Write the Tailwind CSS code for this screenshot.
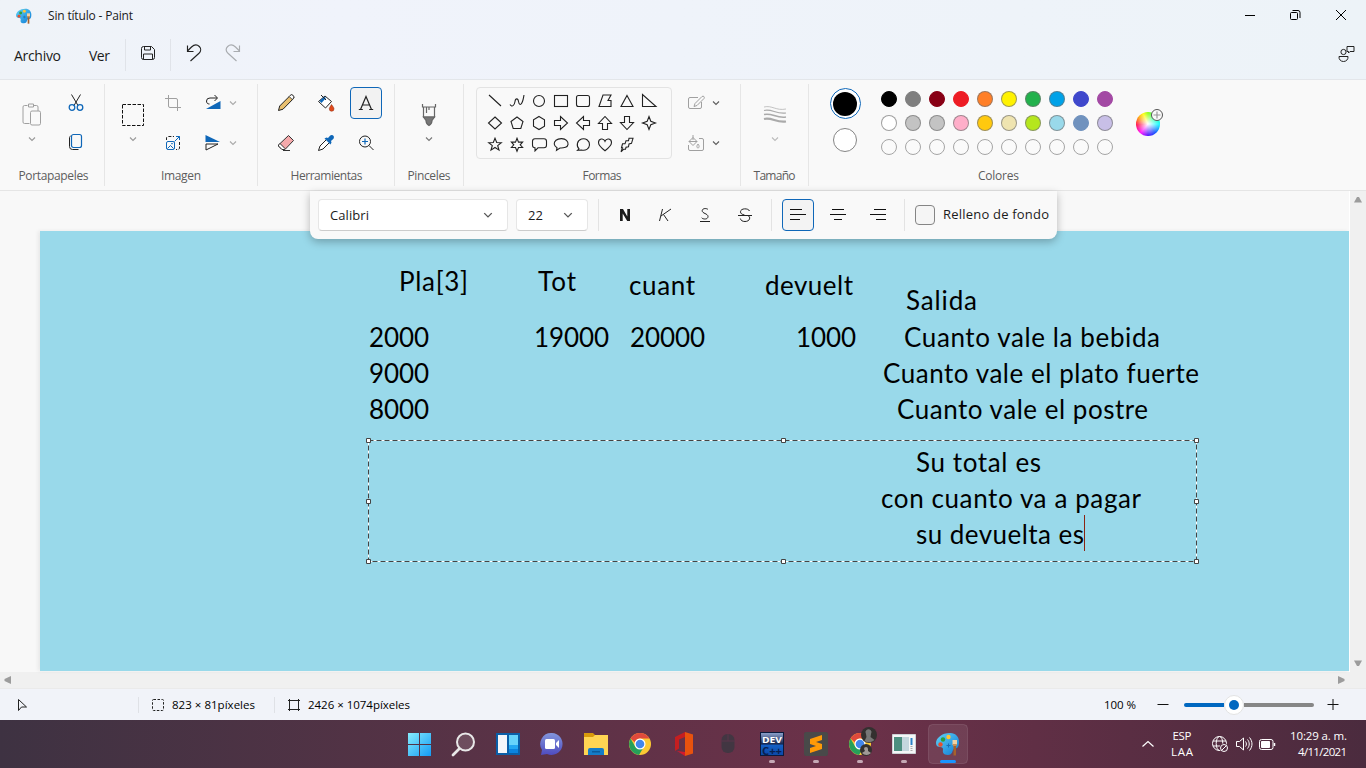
<!DOCTYPE html>
<html lang="es">
<head>
<meta charset="utf-8">
<title>Sin título - Paint</title>
<script src="https://cdn.jsdelivr.net/npm/@tailwindcss/browser@4"></script>
</head>
<body class="w-[1366px] h-[768px] overflow-hidden flex flex-col font-['Open_Sans','Noto_Sans',sans-serif] text-xs text-[#1b1b1b] bg-[#f9f9f9]">
<svg class="absolute w-0 h-0">
  <symbol id="chev" viewBox="0 0 8 8"><path d="M1 2.500 4 5.500 7 2.500" fill="none" stroke="currentColor" stroke-width="1.100"/></symbol>
  <defs><linearGradient id="pg" x1="0" y1="0" x2="1" y2="1"><stop stop-color="#5fd3f7"/><stop offset="1" stop-color="#0f7ad4"/></linearGradient></defs>
  <symbol id="palette" viewBox="0 0 24 24">
    <path d="M14 1c6 0 9 4 9 9 0 3-.5 5-2 6l-3 1c-2 1-1 6-6 6-5 0-5.500-3-5-5s-1-3-3-3-4-1-4-4C0 6 6 1 14 1z" fill="url(#pg)"/>
    <circle cx="7" cy="7.500" r="2.200" fill="#2da03c"/><circle cx="12.500" cy="5" r="2.200" fill="#ffc533"/><circle cx="4.500" cy="12.500" r="2.200" fill="#e8502d"/>
    <path d="M12.500 11.500v4M10.500 13.500h4" stroke="#1a6fb5"/><path d="M16.500 8h4.500v5h-4.500z" fill="#f0d2a4"/><path d="M16.500 12h4.500l-1 3h-2.500z" fill="#c98f55"/><path d="M17.500 14h2.500v9.500h-2.500z" fill="#a5612b"/>
  </symbol>
</svg>

<header class="h-20 shrink-0 flex flex-col border-b border-[#e3e6ea] bg-linear-to-r from-[#eff3f8] via-[#f0f3fb] via-25% to-[#edf3f8]">
  <div class="h-8 flex items-center">
    <svg class="ml-4 w-4 h-4" viewBox="0 0 24 24"><use href="#palette"/></svg>
    <span class="ml-4 leading-4" data-w="85">Sin título - Paint</span>
    <div class="ml-auto flex items-center text-black">
      <svg class="w-[46px] h-7" viewBox="0 0 46 28" fill="none" stroke="currentColor"><path d="M19 13.500h10"/></svg>
      <svg class="w-[46px] h-7" viewBox="0 0 46 28" fill="none" stroke="currentColor"><rect x="18.500" y="10.500" width="7" height="7" rx="1"/><path d="M20.500 8.500h5.500a2 2 0 0 1 2 2v5.500"/></svg>
      <svg class="w-[46px] h-7 mr-0.5" viewBox="0 0 46 28" fill="none" stroke="currentColor"><path d="m18 8 10 10M28 8 18 18"/></svg>
    </div>
  </div>
  <nav class="h-12 flex items-center text-[14px]">
    <span class="ml-3.5 mt-0.5 leading-5" data-w="47">Archivo</span>
    <span class="ml-7 mt-0.5 leading-5" data-w="21">Ver</span>
    <i class="w-px h-8 ml-[15px] bg-[#e0e3e9]"></i>
    <svg class="ml-[14px] w-4 h-4 mb-1" viewBox="0 0 16 16" fill="none" stroke="#222"><path d="M1.500 3.500a2 2 0 0 1 2-2h8l3 3v8a2 2 0 0 1-2 2h-9a2 2 0 0 1-2-2zM4.500 1.500v3.500h6V1.500M3.500 14.500V9h9v5.500"/></svg>
    <i class="w-px h-8 ml-[14px] bg-[#e0e3e9]"></i>
    <svg class="ml-[15px] w-4 h-[18px] mb-1" viewBox="0 0 16 18" fill="none" stroke="#222" stroke-width="1.150"><path d="M1.500 1.500v6h6M1.500 7 5.500 3c3-2.800 6-2.300 7.800-.5s2 4.500-.3 6.800L4.500 17"/></svg>
    <svg class="ml-[23px] w-4 h-[18px] mb-1" viewBox="0 0 16 18" fill="none" stroke="#a9acb0" stroke-width="1.150"><path d="M14.500 1.500v6h-6M14.500 7l-4-4C7.500.2 4.500.7 2.700 2.500s-2 4.500.3 6.800l8.500 7.700"/></svg>
    <svg class="ml-auto mr-[11px] w-[17px] h-[17px] mb-1" viewBox="0 0 17 17" fill="none" stroke="#222"><circle cx="5.500" cy="7" r="2.600"/><path d="M1 11.500h9c.3 3-1.800 5-4.500 5s-4.800-2-4.500-5zM9 1.500h7v5h-4l-1.500 1.500V6.500H9z"/></svg>
  </nav>
</header>

<section class="h-[111px] shrink-0 flex border-b border-[#e5e5e5] text-[#5d5d5d]">
  <div class="w-[105px] flex flex-col items-center border-r border-[#e6e6e6] my-1">
    <div class="h-20 w-full flex">
      <div class="w-16 flex flex-col items-center">
        <svg class="mt-[19px] w-5 h-[23px]" viewBox="0 0 20 23" fill="none" stroke="#a0a0a0"><path d="M7.500 20.500h-5a1.500 1.500 0 0 1-1.500-1.500V4a1.500 1.500 0 0 1 1.500-1.500h3M11.500 2.500h3A1.500 1.500 0 0 1 16 4v4M6.500 1h5v3h-5z"/><rect x="8.500" y="8" width="10" height="14" rx="1.500"/></svg>
        <svg class="mt-[9px] w-2 h-2 text-[#999]"><use href="#chev"/></svg>
      </div>
      <div class="w-6 flex flex-col items-center">
        <svg class="mt-[10px] w-4 h-[18px]" viewBox="0 0 16 18" fill="none"><path d="M3.500.500 10 11.500M12.500.500 6 11.500" stroke="#222"/><g stroke="#0f67b8" stroke-width="1.300"><circle cx="4" cy="13.500" r="2.800"/><circle cx="12" cy="13.500" r="2.800"/></g></svg>
        <svg class="mt-[21px] w-4 h-[18px]" viewBox="0 0 16 18" fill="none"><path d="M2.500 3C1.500 3.500 1.500 4.500 1.500 5v8.500a3 3 0 0 0 3 3h6" stroke="#222"/><rect x="3.500" y="1.500" width="10" height="13" rx="2" stroke="#0f67b8" stroke-width="1.200"/></svg>
      </div>
    </div>
    <span class="mt-1 leading-4 ml-[3px]" data-w="70">Portapapeles</span>
  </div>

  <div class="w-[153px] flex flex-col items-center border-r border-[#e6e6e6] my-1">
    <div class="h-20 w-full flex">
      <div class="w-14 flex flex-col items-center">
        <svg class="mt-[19px] w-6 h-6" viewBox="0 0 24 24" fill="none" stroke="#111"><rect x="1.500" y="1.500" width="21" height="21" stroke-dasharray="3.500 1.500"/></svg>
        <svg class="mt-2 w-2 h-2 text-[#999]"><use href="#chev"/></svg>
      </div>
      <div class="w-6 flex flex-col items-center">
        <svg class="mt-[11px] w-4 h-4" viewBox="0 0 16 16" fill="none" stroke="#a0a0a0"><path d="M0 3.500h11a1.500 1.500 0 0 1 1.500 1.500v11M3.500 0v11A1.500 1.500 0 0 0 5 12.500h11"/></svg>
        <svg class="mt-6 w-4 h-4" viewBox="0 0 16 16" fill="none"><path d="M1.500 5V3a1.500 1.500 0 0 1 1.500-1.500h6M14.500 7v6a1.500 1.500 0 0 1-1.500 1.500h-2" stroke="#222" stroke-dasharray="3 1.500"/><g stroke="#0f67b8"><rect x="1.500" y="6.500" width="8" height="8" rx="1.500"/><path d="m2.500 13.500 3-3 3 3M9.500 6.500l5-5M11 1.500h3.500V5"/><circle cx="7" cy="8.700" r=".4"/></g></svg>
      </div>
      <div class="w-14 flex flex-col pl-5">
        <div class="mt-[10px] flex items-center"><svg class="w-4 h-[18px]" viewBox="0 0 16 18" fill="none"><path d="M12 4H5a3.500 3 0 0 0-3.500 3c0 2 1 3 3 3M9.500 1 12.500 4 9.500 7" stroke="#222"/><path d="M15.500 7v8H1z" fill="#0f67b8"/></svg><svg class="ml-2 w-2 h-2 text-[#aaa]"><use href="#chev"/></svg></div>
        <div class="mt-[22px] flex items-center"><svg class="w-4 h-[18px]" viewBox="0 0 16 18"><path d="M.5 1v7H15z" fill="#0f67b8"/><path d="M1 10v6l12-6z" fill="none" stroke="#222"/></svg><svg class="ml-2 w-2 h-2 text-[#aaa]"><use href="#chev"/></svg></div>
      </div>
    </div>
    <span class="mt-1 leading-4" data-w="40">Imagen</span>
  </div>

  <div class="w-[137px] flex flex-col items-center border-r border-[#e6e6e6] my-1">
    <div class="h-[79px] -mt-px grid grid-cols-[40px_40px_40px] grid-rows-[40px_40px] place-items-center">
      <svg class="w-[18px] h-[18px]" viewBox="0 0 18 18" stroke="#222"><path d="m1.500 16.500 1.200-4.500L13 1.700a2 2 0 0 1 3.200 3.200L6 15.200z" fill="#e9c070"/><path d="m12.200 2.500 3 3 1-1a2 2 0 0 0-3.200-3z" fill="#fff" stroke-width=".8"/></svg>
      <svg class="w-[18px] h-[18px]" viewBox="0 0 18 18"><path d="M1.500 7.500 8 2l6.500 5.500-6 6.500z" fill="#fff" stroke="#222"/><path d="M2.500 7 7 2.500 9 4 4.500 9z" fill="#0f67b8"/><path d="m4 1 5 5" stroke="#222"/><path d="M14.500 10.500c1.800 2.400 2.500 3.300 2.500 4.400a2.300 2.300 0 0 1-4.700 0c0-1 .7-2 2.200-4.400z" fill="#e0491b" stroke="#8c2a0c" stroke-width=".5"/></svg>
      <div class="w-8 h-8 rounded border border-[#0f67b8] bg-[#f2f2f2] flex items-center justify-center"><svg class="w-4 h-4" viewBox="0 0 16 16" fill="none" stroke="#222" stroke-width="1.200"><path d="M2.500 14.500 8 1.500l5.500 13M4.500 10h7M.8 14.500h4M11.200 14.500h4"/></svg></div>
      <svg class="w-[18px] h-[18px]" viewBox="0 0 18 18" stroke="#333"><path d="M1.500 11 11.500 1.500l5 5L8 15.500H5L1.500 12z" fill="#f5a9ab"/><path d="M1.500 11 3 9.500 8 14.500l-1 1H5L1.500 12z" fill="#fff"/><path d="M6 16.500h7"/></svg>
      <svg class="w-[18px] h-[18px]" viewBox="0 0 18 18"><path d="m1.500 16.500 1.500-4.500 7-7 3 3-7 7z" fill="#fff" stroke="#222"/><path d="m7.500 4.500 2-1 1.500.5 2-2.200c1.200-1.300 3-.8 3.600.2.600 1 .3 2.400-.4 3L14 7l.5 1.500-1 2z" fill="#0f67b8"/></svg>
      <svg class="w-[18px] h-[18px]" viewBox="0 0 18 18" fill="none" stroke="#222"><circle cx="8" cy="7.500" r="5.500"/><path d="m12 11.500 4.500 4.500"/><path d="M8 4.500v6M5 7.500h6" stroke="#0f67b8" stroke-width="1.200"/></svg>
    </div>
    <span class="mt-1.5 leading-4 ml-px" data-w="72">Herramientas</span>
  </div>

  <div class="w-[69px] flex flex-col items-center border-r border-[#e6e6e6] my-1">
    <div class="h-20 flex flex-col items-center">
      <svg class="mt-[19px] w-4 h-[24px]" viewBox="0 0 16 24" fill="none" stroke="#666" stroke-width="1.200"><path d="M1.500 1v3h13V1M2.500 4v10h11V4M5.500 4v6M8 4v3"/><path d="M2.500 14h11l-2.500 3.500c0 2-1 4-3 5-2-1-3-3-3-5z" fill="#777"/></svg>
      <svg class="mt-2 w-2 h-2 text-[#777]"><use href="#chev"/></svg>
    </div>
    <span class="mt-1 leading-4" data-w="43">Pinceles</span>
  </div>

  <div class="w-[277px] flex flex-col items-center border-r border-[#e6e6e6] my-1">
    <div class="h-20 w-full flex">
      <div class="ml-[12px] mt-[3px] w-[196px] h-[72px] border border-[#e3e3e3] rounded pl-[7px] pt-[2px]">
        <svg class="w-[176px] h-[66px]" viewBox="0 0 176 66" fill="none" stroke="#222" stroke-width="1.100">
          <path d="m5 5 12 11M26 14.500c2 3 4.500 1 5-3 .5-3.500 3-3.500 3.500 0s2.500 4.500 4 0c.8-2 1-4 1.500-6.500"/>
          <circle cx="55" cy="11" r="5.500"/><rect x="70.500" y="5.500" width="13" height="11"/><rect x="92.500" y="5.500" width="13" height="11" rx="2"/>
          <path d="M119 5h8l-3 5.500h3v6h-12zM143 5.500l6 11h-12zM158.500 4.500v12h13.500z"/>
          <path d="m11 27 6.500 6-6.500 6-6.500-6zM33 27l6 4.500-2.200 7h-7.600l-2.200-7zM55 26.500l5.500 3.300v6.400L55 39.500l-5.500-3.300v-6.400zM70.500 30.500h6v-4l7 6.500-7 6.500v-4h-6zM105.500 30.500h-6v-4l-7 6.500 7 6.500v-4h6zM118.500 39.500v-6h-4l6.500-7 6.500 7h-4v6zM140.500 26.500v6h-4l6.500 7 6.500-7h-4v-6zM165 26.500l1.800 4.700 4.700 1.800-4.700 1.800-1.800 4.700-1.800-4.700-4.700-1.800 4.700-1.800z"/>
          <g transform="translate(0 -.7)"><path d="m11 49 1.700 4.200 4.600.2-3.600 2.900 1.300 4.500-4-2.600-4 2.600 1.300-4.500-3.600-2.900 4.600-.2zM33 49l1.500 3.800h4.100L36.200 55.500l2.400 2.700h-4.100L33 62l-1.500-3.800h-4.100l2.400-2.700-2.400-2.700h4.100zM51 49.500h9a2.500 2.500 0 0 1 2.500 2.500v4a2.500 2.500 0 0 1-2.500 2.500h-6l-3 3v-3a2.500 2.500 0 0 1-2.500-2.500v-4a2.500 2.500 0 0 1 2.500-2.500z"/>
          <path d="M73 58.500c-3.500-2-3.500-5.500-1-7.500s8-2.500 10.500 0 2 6-1 7-4.500.8-5.500.7l-3.500 2.300zM95 59.500c-3-3-2-8.500 2.500-9.800s8.300 2 8 6-4 6-8 5l-4 .3zM121 61.500c-4-3-6.500-5-6.500-8.200 0-4 5-5 6.500-1.300 1.500-3.700 6.500-2.700 6.500 1.300 0 3.200-2.500 5.200-6.500 8.200zM137 62.500l1.500-4h-1l1-4h2.500l1-3h2.500l.5-2.500h4l-1.500 5-2.500.7-.5 2.800-2.500.5-.5 2h-2z"/></g>
        </svg>
      </div>
      <div class="ml-[15px] flex flex-col">
        <div class="mt-[10px] flex items-center"><svg class="w-[18px] h-[18px]" viewBox="0 0 18 18" fill="none" stroke="#a0a0a0"><path d="M11 3.500H3A1.500 1.500 0 0 0 1.500 5v8A1.500 1.500 0 0 0 3 14.500h10a1.500 1.500 0 0 0 1.500-1.500V8M7 12.500l1-3 7-7c1.500-1 3 .5 2 2l-7 7z"/></svg><svg class="ml-[7px] w-2 h-2"><use href="#chev"/></svg></div>
        <div class="mt-[22px] flex items-center"><svg class="w-[18px] h-[18px]" viewBox="0 0 18 18" fill="none" stroke="#a0a0a0"><path d="M1.500 11v4A1.500 1.500 0 0 0 3 16.500h12a1.500 1.500 0 0 0 1.500-1.500V6A1.500 1.500 0 0 0 15 4.500h-3M2 7.500l4-4 4 4-4 4zM2 7.500h8M6 1v5M11 10c2 2.500.8 4 0 4s-2-1.500 0-4z"/></svg><svg class="ml-[7px] w-2 h-2"><use href="#chev"/></svg></div>
      </div>
    </div>
    <span class="mt-1 leading-4" data-w="39">Formas</span>
  </div>

  <div class="w-[68px] flex flex-col items-center border-r border-[#e6e6e6] my-1">
    <div class="h-20 flex flex-col items-center">
      <svg class="mt-[21px] w-6 h-[20px]" viewBox="0 0 24 20" fill="none" stroke="#aaa"><path stroke-width=".7" d="M1 2c8-2 12 4 22 2"/><path stroke-width="1.200" d="M1 5.500c8-2 12 4 22 2.500"/><path stroke-width="1.600" d="M1 9.500c8-2 12 4 22 2.500"/><path stroke-width="2.200" d="M1 14c8-2 12 4 22 2.500"/></svg>
      <svg class="mt-[10px] w-2 h-2 text-[#bbb]"><use href="#chev"/></svg>
    </div>
    <span class="mt-1 leading-4" data-w="42">Tamaño</span>
  </div>

  <div class="w-[379px] flex flex-col items-center my-1">
    <div class="h-20 w-full flex">
      <div class="ml-5 w-8 flex flex-col items-center">
        <div class="mt-1 w-[31px] h-[31px] rounded-full border border-[#0f67b8] flex items-center justify-center bg-white"><i class="w-6 h-6 rounded-full bg-black"></i></div>
        <i class="mt-[9px] w-6 h-6 rounded-full border border-[#858585] bg-white"></i>
      </div>
      <div id="sw" class="ml-5 mt-[7px] h-16 grid grid-cols-[repeat(10,16px)] gap-2"></div>
      <div class="relative ml-[23px] mt-7 w-6 h-6 rounded-full bg-[radial-gradient(circle,#fff_0%,transparent_75%),conic-gradient(from_0deg,#8f0,#0f8_45deg,#0ff_90deg,#04f_140deg,#40f_180deg,#f0f_220deg,#f04_265deg,#f80_300deg,#ff0_335deg,#8f0)]">
        <svg class="absolute left-[14px] -top-[4px] w-[14px] h-[14px]" viewBox="0 0 14 14"><circle cx="7" cy="7" r="5.500" fill="#fafafa" stroke="#555"/><path d="M7 3.500v7M3.500 7h7" stroke="#999" stroke-width="1.200"/></svg>
      </div>
    </div>
    <span class="mt-1 leading-4" data-w="41">Colores</span>
  </div>
</section>

<main class="relative h-[481px] shrink-0 flex bg-[#f8f8f8]">
  <div class="relative ml-10 mt-10 w-[1309px] h-[440px] bg-[#99d9ea] shadow-[-2px_0_4px_#0001] text-black text-[26px] leading-9 font-[Lato,sans-serif] whitespace-pre" id="cv">
    <svg class="absolute left-[325px] top-[206px] w-[836px] h-[130px]" viewBox="365 437 836 130" fill="none">
      <rect x="368.500" y="440.500" width="828" height="121" stroke="#fff"/>
      <rect x="368.500" y="440.500" width="828" height="121" stroke="#444" stroke-dasharray="5 3"/>
      <g fill="#fff" stroke="#444"><path d="M366.500 438.500h4v4h-4zM781.500 438.500h4v4h-4zM1194.500 438.500h4v4h-4zM366.500 499.500h4v4h-4zM1194.500 499.500h4v4h-4zM366.500 559.500h4v4h-4zM781.500 559.500h4v4h-4zM1194.500 559.500h4v4h-4z"/></g>
      <path d="M1084.500 515v36" stroke="#8b2412"/>
    </svg>
  </div>
  <div class="w-[17px] bg-[#f0f0f0] flex flex-col items-center justify-between py-[4px] border-l border-white">
    <svg class="w-2 h-[9px]" viewBox="0 0 8 9"><path d="M0 7.500h8L5 2H3z" fill="#9c9c9c"/></svg>
    <svg class="w-2 h-[9px]" viewBox="0 0 8 9"><path d="M0 1.500h8L5 7H3z" fill="#9c9c9c"/></svg>
  </div>
  <div class="absolute left-[310px] top-0 w-[747px] h-12 bg-[#f9f9f9] rounded-b-lg shadow-[0_3px_8px_#0004] flex items-center pl-2 text-[13px]">
    <div class="w-[190px] h-8 bg-white border border-[#e6e6e6] border-b-[#ccc] rounded flex items-center px-[11px] justify-between"><span class="leading-4" data-w="39">Calibri</span><svg class="w-4 h-4 p-[3px] text-[#555]"><use href="#chev"/></svg></div>
    <div class="ml-2 w-[72px] h-8 bg-white border border-[#e6e6e6] border-b-[#ccc] rounded flex items-center px-[11px] justify-between"><span class="leading-4" data-w="15">22</span><svg class="w-4 h-4 p-[3px] text-[#555]"><use href="#chev"/></svg></div>
    <i class="ml-[10px] w-px h-8 bg-[#e3e3e3]"></i>
    <svg class="ml-4 w-5 h-5" viewBox="0 0 20 20" fill="#1b1b1b"><path d="M5 4h3l4.300 7.500V4H15v12h-2.800L7.700 8.500V16H5z"/></svg>
    <svg class="ml-5 w-5 h-5" viewBox="0 0 20 20" fill="none" stroke="#222"><path d="M7.500 4 4.500 16M16 4 6 11M8.500 9.500 13 16"/></svg>
    <svg class="ml-5 w-5 h-5" viewBox="0 0 20 20" fill="none" stroke="#222"><path d="M13 4.500c-1-1.200-5.500-1.700-5.800 1.200C7 8.500 13 8.500 13 11.500c0 3.200-5 3-6.300 1.300M5 16.500h10"/></svg>
    <svg class="ml-5 w-5 h-5" viewBox="0 0 20 20" fill="none" stroke="#222"><path d="M14.500 6c-1-3-9-3-9 .8 0 1.700 1.300 2.600 4 3.200M3 10.500h14M13 10.500c3 1.500 2 6-3 6-2.500 0-4.200-1-4.700-3"/></svg>
    <i class="ml-4 w-px h-8 bg-[#e3e3e3]"></i>
    <div class="ml-[10px] w-8 h-8 rounded border border-[#0f67b8] bg-[#f3f3f3] flex items-center justify-center"><svg class="w-4 h-4" viewBox="0 0 16 16" stroke="#111"><path d="M0 2.500h12M0 7.500h16M0 12.500h10"/></svg></div>
    <svg class="ml-4 w-4 h-4" viewBox="0 0 16 16" stroke="#111"><path d="M2 2.500h12M0 7.500h16M4 12.500h8"/></svg>
    <svg class="ml-6 w-4 h-4" viewBox="0 0 16 16" stroke="#111"><path d="M4 2.500h12M0 7.500h16M6 12.500h10"/></svg>
    <i class="ml-[18px] w-px h-8 bg-[#e3e3e3]"></i>
    <i class="ml-[10px] w-5 h-5 border border-[#858585] rounded bg-[#f5f5f5]"></i>
    <span class="ml-2 mb-0.5 leading-4" data-w="106">Relleno de fondo</span>
  </div>
</main>

<div class="h-4 shrink-0 bg-[#f0f0f0] flex items-center justify-between pl-1 pr-[21px]">
  <svg class="w-2 h-2" viewBox="0 0 8 8"><path d="M7 0v8L.5 5V3z" fill="#9c9c9c"/></svg>
  <svg class="w-2 h-2" viewBox="0 0 8 8"><path d="M1 0v8l6.500-3V3z" fill="#9c9c9c"/></svg>
</div>

<footer class="h-8 shrink-0 flex items-center bg-[#f1f3f9] border-t border-[#eaeaea] text-[11.500px] text-black">
  <svg class="ml-4 w-3 h-[14px]" viewBox="0 0 12 14" fill="none" stroke="#222"><path d="M2.500 1.500v11l3-3.500h5z"/></svg>
  <i class="ml-[110px] w-px h-4 bg-[#dfe1e6]"></i>
  <svg class="ml-3 w-[14px] h-[14px]" viewBox="0 0 14 14" fill="none" stroke="#222"><rect x="1.500" y="1.500" width="11" height="11" rx="1" stroke-dasharray="2.500 1.500"/></svg>
  <span class="ml-[7px] mt-px leading-4" data-w="83">823 × 81píxeles</span>
  <i class="ml-[19px] w-px h-4 bg-[#dfe1e6]"></i>
  <svg class="ml-3 w-[14px] h-[14px]" viewBox="0 0 14 14" fill="none" stroke="#222"><path d="M2.500 1v12M11.500 1v12M1 2.500h12M1 11.500h12"/></svg>
  <span class="ml-[7px] mt-px leading-4" data-w="102">2426 × 1074píxeles</span>
  <span class="ml-auto mt-px leading-4" data-w="32">100 %</span>
  <svg class="ml-[21px] w-3 h-3" viewBox="0 0 12 12" stroke="#111"><path d="M.5 5.500h11"/></svg>
  <div class="ml-[15px] w-[130px] flex items-center">
    <i class="w-10 h-1 rounded-l bg-[#0067c0]"></i>
    <i class="w-5 h-5 rounded-full bg-white border border-[#e3e3e3] flex items-center justify-center"><i class="w-[10px] h-[10px] rounded-full bg-[#0067c0]"></i></i>
    <i class="flex-1 h-1 rounded-r bg-[#868686]"></i>
  </div>
  <svg class="ml-[13px] mr-[27px] w-3 h-3" viewBox="0 0 12 12" stroke="#111"><path d="M.5 5.500h11M6 0v11"/></svg>
</footer>

<div class="h-12 shrink-0 flex items-center text-white bg-linear-to-r from-[#3e3242] via-[#6c3149] via-62% to-[#4b2b3e]">
  <div class="ml-[398px] flex h-12 *:w-11 *:h-12">
    <svg viewBox="0 0 44 48"><defs><linearGradient id="w" x1="0" y1="0" x2="1" y2="1"><stop stop-color="#86ecfc"/><stop offset="1" stop-color="#139bf5"/></linearGradient></defs><path d="M10 13h11v11H10zM22 13h11v11H22zM10 25h11v11H10zM22 25h11v11H22z" fill="url(#w)"/></svg>
    <svg viewBox="0 0 44 48" fill="#ffffff22" stroke="#e8e8e8"><circle cx="23.500" cy="22" r="8.500" stroke-width="2"/><path d="m17 29-6 6" stroke-width="2.800" stroke-linecap="round"/></svg>
    <svg viewBox="0 0 44 48"><path d="M10 13h24v22H10z" fill="#0a5fa8"/><path d="M12 15h9v18h-9z" fill="#f3f6fa"/><path d="M23 15h9v10h-9z" fill="#66d3fb"/><path d="M23 25h9v4h-9z" fill="#22a7f2"/><path d="M23 29h9v4h-9z" fill="#0a84e0"/></svg>
    <svg viewBox="0 0 44 48"><defs><linearGradient id="t" x1="0" y1="0" x2="0" y2="1"><stop stop-color="#8296dc"/><stop offset="1" stop-color="#4f4bc0"/></linearGradient></defs><path d="M22 13a11 11 0 1 1-5 21l-6 1 1-5a11 11 0 0 1 10-17z" fill="url(#t)"/><rect x="15" y="19" width="10" height="10" rx="1.500" fill="#fff"/><path d="m26 23 3-3v8l-3-3z" fill="#fff"/></svg>
    <svg viewBox="0 0 44 48"><path d="M10 13h9l2 2v4H10z" fill="#d99a0b"/><path d="M10 17h9l2-2h13v20H10z" fill="#ffd553"/><path d="M14 35v-5a2 2 0 0 1 2-2h12a2 2 0 0 1 2 2v5z" fill="#147cc8"/><path d="M18 31h8v1.500h-8z" fill="#0a5a9b"/></svg>
    <svg viewBox="0 0 44 48"><g id="chr"><circle cx="22" cy="24" r="11" fill="#fbc933"/><path d="M12.500 18.500A11 11 0 0 1 31.500 18.500H22a5.500 5.500 0 0 0-5 4z" fill="#df4a3c"/><path d="M12.500 18.500a11 11 0 0 0 8.500 16.400l4.500-7.500c-2.500 2.500-6.500 1.800-8.300-1z" fill="#26a05a"/><circle cx="22" cy="24" r="5.500" fill="#fff"/><circle cx="22" cy="24" r="4.300" fill="#4287ec"/></g></svg>
    <svg viewBox="0 0 44 48"><path d="m13 17 10-5v5l-6 2.500v9l-4 2.500z" fill="#c51e20"/><path d="m23 12 8 2.500v19L23 36z" fill="#e8520e"/><path d="m15 31 8 1v4z" fill="#d21a2c"/></svg>
    <svg viewBox="0 0 44 48"><rect x="15.500" y="14" width="13" height="19" rx="6" fill="#423642"/><path d="M15 21h14M22 14v7" stroke="#5a344a"/></svg>
    <svg viewBox="0 0 44 48"><defs><linearGradient id="d" x1="0" y1="0" x2="0" y2="1"><stop stop-color="#8fa5cf"/><stop offset=".5" stop-color="#16264f"/><stop offset=".55" stop-color="#1560c4"/><stop offset="1" stop-color="#0b48a8"/></linearGradient></defs><rect x="10.500" y="12.500" width="23" height="23" fill="url(#d)" stroke="#0b1a3c"/><text x="12" y="22.500" font-size="9.500" font-weight="bold" fill="#fff" textLength="20" lengthAdjust="spacingAndGlyphs">DEV</text><text x="12" y="34.500" font-size="10" font-weight="bold" fill="#09204f" textLength="20" lengthAdjust="spacingAndGlyphs">C++</text><rect x="19" y="40" width="6" height="3" rx="1.500" fill="#c5a9b5"/></svg>
    <svg viewBox="0 0 44 48"><rect x="10" y="12" width="24" height="24" rx="2" fill="#494949"/><path d="m16 19 12-4v5l-6 2 6 2v5l-12 4v-5l6-2-6-2z" fill="#ff9a07"/><rect x="19" y="40" width="6" height="3" rx="1.500" fill="#c5a9b5"/></svg>
    <svg viewBox="0 0 44 48"><use href="#chr"/><circle cx="31" cy="15" r="8" fill="#33302f"/><path d="M28 14a3 3 0 1 1 5 0l-.5 3 4 3a8 8 0 0 1-10 1l2-4z" fill="#777"/><circle cx="28" cy="30" r="6" fill="#33302f"/><path d="M26 29a2 2 0 1 1 4 0v2l3 2a6 6 0 0 1-9 0l3-2z" fill="#a09a96"/><rect x="19" y="40" width="6" height="3" rx="1.500" fill="#c5a9b5"/></svg>
    <svg viewBox="0 0 44 48"><path d="M10.500 14.500h23v19h-23z" fill="#f4f6f7" stroke="#cdd2d6"/><path d="M12 17h8v14h-8z" fill="#4c8f80"/><path d="M20 17h7v14h-7z" fill="#c4d6dd"/><path d="M29.500 18v7" stroke="#2a82c8" stroke-width="2"/><path d="M29.500 26v6" stroke="#aaa" stroke-width="2" stroke-dasharray="1 1"/><rect x="19" y="40" width="6" height="3" rx="1.500" fill="#c5a9b5"/></svg>
    <svg viewBox="0 0 44 48"><rect x="2.500" y="4.500" width="39" height="39" rx="4" fill="#ffffff14" stroke="#ffffff1c"/><use href="#palette" x="10" y="12" width="24" height="24"/><rect x="14" y="40" width="16" height="3" rx="1.500" fill="#1994ff"/></svg>
  </div>
  <svg class="ml-auto w-3 h-2" viewBox="0 0 12 8" fill="none" stroke="#fff" stroke-width="1.200"><path d="m.5 6.500 5.500-5 5.500 5"/></svg>
  <div class="ml-[17px] w-[22px] text-center text-[11.500px] leading-4"><div><span data-w="19">ESP</span></div><div><span data-w="22">LAA</span></div></div>
  <svg class="ml-[18px] w-[18px] h-[18px]" viewBox="0 0 18 18" fill="none" stroke="#fff"><circle cx="8.500" cy="8.500" r="7"/><ellipse cx="8.500" cy="8.500" rx="3.300" ry="7"/><path d="M2 6h13M2 11h7"/><circle cx="13" cy="13" r="4.500" fill="#542c42" stroke="none"/><circle cx="13" cy="13" r="3.500"/><path d="m10.500 15.500 5-5"/></svg>
  <svg class="ml-[6px] w-[18px] h-4" viewBox="0 0 18 16" fill="none" stroke="#fff"><path d="M1.500 5.500h3l4-3.500v12l-4-3.500h-3zM10.500 5.500c1.200 1.500 1.200 3.500 0 5M12.500 3.500c2.300 2.700 2.300 6.300 0 9M14.500 1.500c3.300 4 3.300 9 0 13"/></svg>
  <svg class="ml-[6px] w-[17px] h-[11px]" viewBox="0 0 17 11" fill="none" stroke="#fff"><rect x=".5" y=".5" width="13.500" height="10" rx="2"/><path d="M2.500 2.500h8v6h-8z" fill="#fff"/><path d="M15.500 4v3" stroke-width="1.500"/></svg>
  <div class="ml-[13px] mr-[19px] w-[58px] text-right text-[11.500px] leading-4"><div><span data-w="57">10:29 a. m.</span></div><div><span data-w="49">4/11/2021</span></div></div>
</div>

<script>
// Palette swatches
const rings = ['#000','#7f7f7f','#880015','#ed1c24','#ff7f27*','#fff200*','#22b14c*','#00a2e8*','#3f48cc','#a349a4','#fff*','#c3c3c3*','#c3c3c3*','#ffaec9*','#ffc90e*','#efe4b0*','#b5e61d*','#99d9ea*','#7092be','#c8bfe7*'];
for (let i = 0; i < 30; i++) {
  const s = document.createElement('i'), c = rings[i] || '#fafafa*';
  s.className = 'w-4 h-4 rounded-full border';
  s.style.background = c.replace('*', '');
  s.style.borderColor = c.endsWith('*') ? (i > 19 ? '#a5a5a5' : '#707070aa') : c;
  document.getElementById('sw').append(s);
}
// Text painted on the canvas: text, left, baseline, width
[['Pla[3]',399,290,69],['Tot',538,290,38],['cuant',629,294,66],['devuelt',765,294,88],['Salida',906,309,71],
 ['2000',369,346,60],['19000',534,346,75],['20000',630,346,75],['1000',796,346,60],['Cuanto vale la bebida',904,346,256],
 ['9000',369,382,60],['Cuanto vale el plato fuerte',883,382,316],['8000',369,418,60],['Cuanto vale el postre',897,418,251],
 ['Su total es',916,471,125],['con cuanto va a pagar',881,507,260],['su devuelta es',916,543,168]].forEach(([t,x,y,w]) => {
  const s = document.createElement('span');
  s.className = 'absolute';
  s.textContent = t; s.dataset.w = w;
  s.style.left = x - 40 + 'px'; s.style.top = y - 27 - 231 + 'px';
  document.getElementById('cv').append(s);
});
// Track each label to its nominal width
function fit() {
  document.querySelectorAll('[data-w]').forEach(e => {
    e.style.whiteSpace = 'pre';
    e.style.letterSpacing = '0px';
    e.style.marginRight = '0px';
    const g = (e.dataset.w - e.getBoundingClientRect().width) / (e.textContent.length - 1);
    e.style.letterSpacing = g + 'px';
    e.style.marginRight = -g + 'px';
  });
}
fit();
addEventListener('load', fit);
new ResizeObserver(fit).observe(document.body);
</script>
</body>
</html>
